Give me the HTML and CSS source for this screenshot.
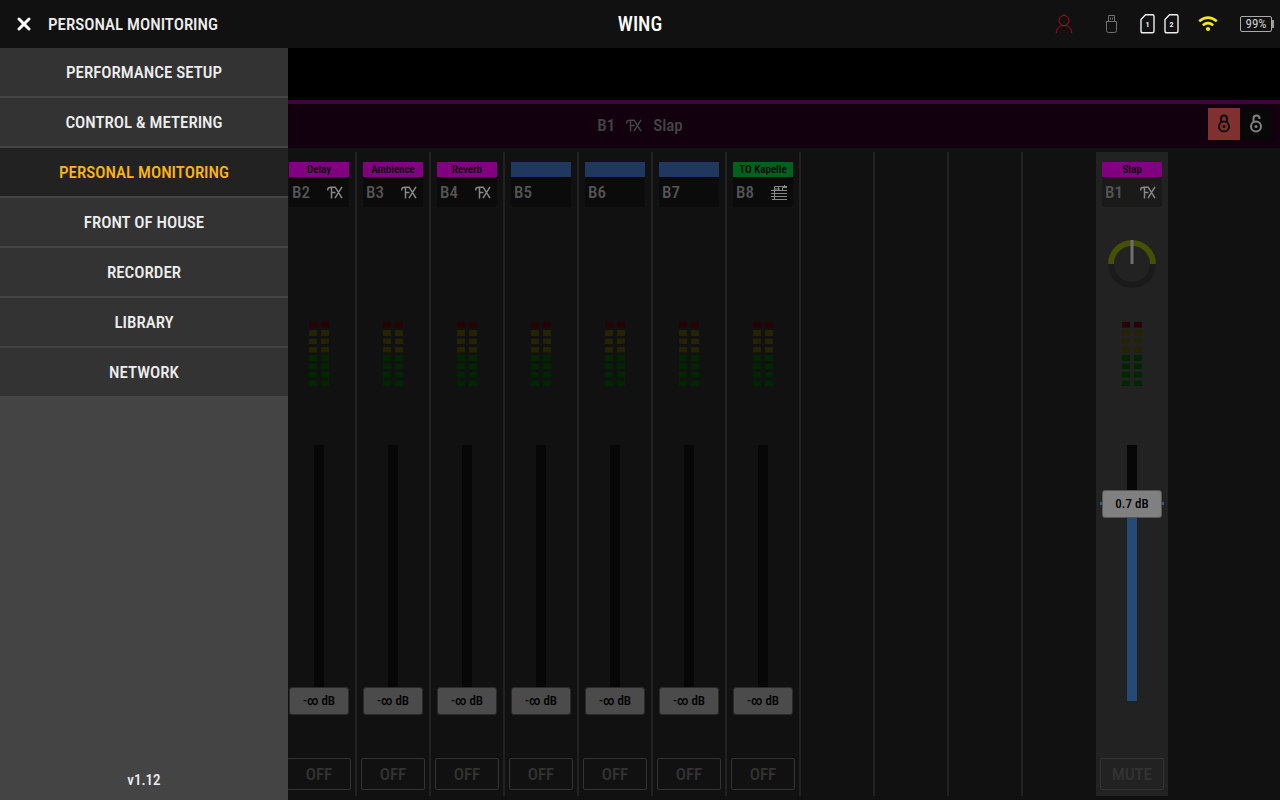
FILE: index.html
```html
<!DOCTYPE html>
<html lang="en">
<head>
  <meta charset="UTF-8" />
  <meta name="viewport" content="width=device-width, initial-scale=1.0" />
  <title>WING – Personal Monitoring</title>
  <link rel="stylesheet" href="styles.css">
</head>
<body>
  <svg class="sprite" aria-hidden="true">
    <symbol id="icon-fx" viewBox="0 0 16 13">
      <path d="M.8 4.500C.5 2 1.800 1.200 4 1.200h4.200L15 12.200M4.500 1.200v11.300M4.500 6.500h4M15 .8 8 12.200" />
    </symbol>
    <symbol id="icon-matrix" viewBox="0 0 16 15">
      <path d="M0 5.500h16M0 8.500h16M0 11.500h16M1 14.500h15M3.500 14V1.500H16M7.500 6V1.500M11.500 6V2.500H16M13.500 0v3M3.500 4H9" />
    </symbol>
    <symbol id="meter" viewBox="0 0 20 65">
      <path class="meter-red" d="M0 0h8v5.500H0zM12 0h8v5.500h-8z" />
      <path class="meter-yellow" d="M0 8h8v6H0zM12 8h8v6h-8zM0 16.500h8v5.500H0zM12 16.500h8v5.500h-8zM0 25h8v5.500H0zM12 25h8v5.500h-8z" />
      <path class="meter-green" d="M0 33h8v6H0zM12 33h8v6h-8zM0 41.500h8v5.500H0zM12 41.500h8v5.500h-8zM0 50h8v5.500H0zM12 50h8v5.500h-8zM0 58.500h8v5.500H0zM12 58.500h8v5.500h-8z" />
    </symbol>
  </svg>

  <header class="topbar">
    <div class="topbar-left">
      <button class="close-button" aria-label="Close menu">
        <svg width="14" height="14" viewBox="0 0 14 14"><path d="M2 2l10 10M12 2L2 12" /></svg>
      </button>
      <h1>PERSONAL MONITORING</h1>
    </div>
    <div class="device-name">WING</div>
    <div class="status">
      <svg class="status-user" width="18" height="20" viewBox="0 0 18 20"><circle cx="9" cy="6.500" r="5" /><path d="M1.200 19c.3-4.500 3-7.500 7.800-7.500s7.500 3 7.800 7.500" /></svg>
      <svg class="status-usb" width="13" height="20" viewBox="0 0 13 20"><path d="M3.500 7.500v-6h6v6M5.500 3.500v2M7.500 3.500v2M1.500 7.500h10v9q0 2-2 2h-6q-2 0-2-2z" /></svg>
      <div class="cards">
        <span class="card"><svg width="15" height="20" viewBox="0 0 15 20"><path d="M5.500.800h7q1.500 0 1.500 1.500v15q0 1.500-1.500 1.500h-10Q1 18.800 1 17.300V5.500z" /></svg><b>1</b></span>
        <span class="card"><svg width="15" height="20" viewBox="0 0 15 20"><path d="M5.500.800h7q1.500 0 1.500 1.500v15q0 1.500-1.500 1.500h-10Q1 18.800 1 17.300V5.500z" /></svg><b>2</b></span>
      </div>
      <svg class="status-wifi" width="20" height="16" viewBox="0 0 20 16"><path d="M1.200 5.200q8.800-7.200 17.600 0M4.800 9.200q5.200-4.200 10.400 0" /><circle cx="10" cy="13" r="2.100" /></svg>
      <div class="battery">99%</div>
    </div>
  </header>

  <main class="stage">
    <nav class="drawer" aria-label="Main menu">
      <a href="#setup">PERFORMANCE SETUP</a>
      <a href="#control">CONTROL &amp; METERING</a>
      <a href="#monitoring" class="active">PERSONAL MONITORING</a>
      <a href="#foh">FRONT OF HOUSE</a>
      <a href="#recorder">RECORDER</a>
      <a href="#library">LIBRARY</a>
      <a href="#network">NETWORK</a>
      <div class="version">v1.12</div>
    </nav>

    <div class="preview"></div>

    <div class="bus-bar">
      <div class="bus-title">
        <span>B1</span>
        <svg width="16" height="13"><use href="#icon-fx" /></svg>
        <span>Slap</span>
      </div>
      <div class="locks">
        <button class="lock locked" aria-label="Lock">
          <svg width="14" height="20" viewBox="0 0 14 20"><circle cx="7" cy="12.500" r="5" /><circle class="dot" cx="7" cy="12.500" r="1.500" /><path d="M4 8V4.500a3 3 0 0 1 6 0V8" /></svg>
        </button>
        <button class="lock" aria-label="Unlock">
          <svg width="14" height="20" viewBox="0 0 14 20"><circle cx="7" cy="12.500" r="5" /><circle class="dot" cx="7" cy="12.500" r="1.500" /><path d="M4.500 8V4.500a3 3 0 0 1 6 0V5" /></svg>
        </button>
      </div>
    </div>

    <div class="mixer">
      <div class="bank" id="bank"></div>
      <div class="master" id="master"></div>
    </div>
  </main>

  <script>
    const sends = [
      { id: 'B2', name: 'Delay', color: 'purple', icon: 'fx' },
      { id: 'B3', name: 'Ambience', color: 'purple', icon: 'fx' },
      { id: 'B4', name: 'Reverb', color: 'purple', icon: 'fx' },
      { id: 'B5', name: '', color: 'blue' },
      { id: 'B6', name: '', color: 'blue' },
      { id: 'B7', name: '', color: 'blue' },
      { id: 'B8', name: 'TO Kapelle', color: 'green', icon: 'matrix' }
    ];
    const slots = 11;

    const knob = `
      <label class="knob">
        <input type="range" min="-100" max="100" value="0" aria-label="B1 pan">
        <svg width="48" height="48" viewBox="0 0 48 48">
          <circle class="knob-ring" cx="24" cy="24" r="21" />
          <path class="knob-arc" d="M3 24a21 21 0 0 1 42 0" />
          <path class="knob-hand" d="M24 0v24" />
        </svg>
      </label>`;

    function strip(ch) {
      const icon = ch.icon ? `<svg class="icon-${ch.icon}"><use href="#icon-${ch.icon}" /></svg>` : '';
      return `
        <div class="scribble ${ch.color}">${ch.name}</div>
        <div class="channel"><span>${ch.id}</span>${icon}</div>
        <div class="pan">${ch.pan ? knob : ''}</div>
        <svg class="meter"><use href="#meter" /></svg>
        <div class="fader" style="--level: ${ch.level || 0}">
          <input type="range" id="fader-${ch.id}" min="0" max="1" step="any" value="${ch.level || 0}" aria-label="${ch.id} level">
          <output for="fader-${ch.id}">${ch.db || '-∞ dB'}</output>
        </div>
        <button class="mute">${ch.button || 'OFF'}</button>`;
    }

    // Unused slots stay as blank strips
    const bank = document.getElementById('bank');
    for (let i = 0; i < slots; i++) {
      const el = document.createElement('div');
      el.className = 'strip';
      if (sends[i]) el.innerHTML = strip(sends[i]);
      bank.appendChild(el);
    }

    document.getElementById('master').innerHTML = strip({
      id: 'B1', name: 'Slap', color: 'purple', icon: 'fx',
      pan: true, level: 0.77, db: '0.7 dB', button: 'MUTE'
    });
  </script>
</body>
</html>
```

FILE: styles.css
```css
* {
  margin: 0;
  padding: 0;
  box-sizing: border-box;
}

body {
  display: flex;
  flex-direction: column;
  height: 100vh;
  overflow: hidden;
  background: #111;
  color: #eee;
  font-family: 'Roboto Condensed', 'Liberation Sans Narrow', Roboto, sans-serif;
  font-size: 17px;
  font-weight: 500;
}

button, input, output {
  font: inherit;
}

button {
  border: none;
  cursor: pointer;
}

svg {
  display: block;
  fill: none;
  stroke: currentColor;
}

.sprite {
  position: absolute;
  width: 0;
  height: 0;
}

/* top bar */
.topbar {
  display: grid;
  grid-template-columns: 1fr auto 1fr;
  align-items: center;
  height: 48px;
  flex: none;
  background: #111;
}

.topbar-left {
  display: flex;
  align-items: center;
}

.topbar h1 {
  font-size: 17px;
  font-weight: 500;
}

.close-button {
  display: flex;
  align-items: center;
  justify-content: center;
  width: 48px;
  height: 48px;
  background: none;
  color: #fff;
}

.close-button svg {
  stroke-width: 3;
  stroke-linecap: round;
}

.device-name {
  font-size: 20px;
  color: #fff;
}

.status {
  display: flex;
  align-items: center;
  justify-content: flex-end;
  padding-right: 8px;
}

.status-user {
  color: #b8001c;
  margin-right: 32px;
}

.status-usb {
  color: #707070;
  margin-right: 22px;
}

.cards {
  display: flex;
  gap: 9px;
  margin-right: 19px;
}

.card {
  position: relative;
  color: #eee;
}

.card svg {
  stroke-width: 1.4;
}

.card b {
  position: absolute;
  inset: 5px 0 0;
  font-size: 8px;
  line-height: 12px;
  text-align: center;
}

.status-wifi {
  color: #f8e71c;
  stroke-width: 2.5;
  margin-right: 22px;
}

.status-wifi circle {
  fill: currentColor;
  stroke: none;
}

.battery {
  position: relative;
  width: 32px;
  height: 16px;
  border: 1px solid #aaa;
  border-radius: 2px;
  color: #ccc;
  font-size: 13px;
  font-weight: 400;
  line-height: 14px;
  text-align: center;
}

.battery::after {
  content: '';
  position: absolute;
  top: 3px;
  right: -3px;
  width: 2px;
  height: 8px;
  background: #999;
}

/* menu */
.stage {
  position: relative;
  display: flex;
  flex-direction: column;
  flex: 1;
  min-height: 0;
}

.drawer {
  position: absolute;
  top: 0;
  bottom: 0;
  left: 0;
  z-index: 10;
  display: flex;
  flex-direction: column;
  gap: 2px;
  width: 288px;
  background: #444;
}

.drawer a {
  height: 48px;
  background: #333;
  color: #eee;
  line-height: 48px;
  text-align: center;
  text-decoration: none;
}

.drawer a.active {
  background: #222;
  color: #fdb515;
}

.version {
  margin-top: auto;
  height: 40px;
  font-size: 15px;
  line-height: 40px;
  text-align: center;
}

/* selected bus */
.preview {
  height: 52px;
  flex: none;
  background: #000;
}

.bus-bar {
  display: grid;
  grid-template-columns: 1fr auto 1fr;
  align-items: center;
  height: 48px;
  flex: none;
  border-top: 4px solid #400040;
  background: #12000f;
}

.bus-title {
  grid-column: 2;
  display: flex;
  align-items: center;
  gap: 11px;
  padding-bottom: 2px;
  color: #444;
}

.bus-title svg {
  stroke-width: 1.5;
}

.locks {
  display: flex;
  align-self: start;
  justify-self: end;
  padding: 4px 8px 0 0;
}

.lock {
  display: flex;
  align-items: center;
  justify-content: center;
  width: 32px;
  height: 32px;
  background: #080808;
  color: #808080;
}

.lock.locked {
  background: #803030;
  color: #111;
}

.lock svg {
  stroke-width: 2;
}

.lock .dot {
  fill: currentColor;
  stroke: none;
}

/* strips */
.mixer {
  display: flex;
  justify-content: flex-end;
  flex: 1;
  min-height: 0;
  padding: 4px 112px 4px 0;
}

.bank {
  display: flex;
}

.strip,
.master {
  display: flex;
  flex-direction: column;
  align-items: center;
  width: 72px;
  padding: 10px 4px 6px;
}

.strip {
  box-sizing: content-box;
  width: 64px;
  border-right: 2px solid #222;
}

.strip:last-child {
  border-right-width: 1px;
  border-color: transparent;
}

.master {
  background: #222;
}

.scribble {
  width: 60px;
  height: 15px;
  flex: none;
  color: #000;
  font-size: 11px;
  line-height: 15px;
  text-align: center;
  white-space: nowrap;
}

.purple {
  background: #800080;
}

.blue {
  background: #203860;
}

.green {
  background: #006020;
}

.channel {
  display: flex;
  align-items: center;
  justify-content: space-between;
  width: 60px;
  height: 30px;
  padding: 0 6px 0 3px;
  flex: none;
  border-radius: 0 0 2px 2px;
  background: #0b0b0b;
  color: #555;
}

.master .channel {
  background: #1a1a1a;
}

.icon-fx {
  width: 16px;
  height: 13px;
  color: #888;
  stroke-width: 1.5;
}

.icon-matrix {
  width: 16px;
  height: 15px;
  color: #888;
}

.pan {
  height: 115px;
  padding-top: 33px;
  flex: none;
}

.knob {
  display: block;
  position: relative;
}

.knob input {
  position: absolute;
  inset: 0;
  width: 48px;
  opacity: 0;
}

.knob-ring {
  stroke: #1a1a1a;
  stroke-width: 6;
}

.knob-arc {
  stroke: #455000;
  stroke-width: 6;
}

.knob-hand {
  stroke: #707070;
  stroke-width: 3;
}

.meter {
  width: 20px;
  height: 65px;
  flex: none;
}

.meter-red, .meter-yellow, .meter-green {
  stroke: none;
}

.meter-red {
  fill: #280000;
}

.meter-yellow {
  fill: #252200;
}

.meter-green {
  fill: #002600;
}

.fader {
  --thumb: 28px;
  --travel: calc(100% - var(--thumb));
  position: relative;
  width: 64px;
  min-height: 0;
  margin: 44px 0 43px;
  flex: 1;
}

.fader input {
  display: block;
  width: 64px;
  height: 100%;
  appearance: none;
  writing-mode: vertical-lr;
  direction: rtl;
  background:
    linear-gradient(#254a75, #254a75) 50% calc(100% - 14px) / 10px calc(var(--travel) * var(--level)) no-repeat,
    linear-gradient(#070707, #070707) 50% 50% / 10px var(--travel) no-repeat;
}

.fader input::-webkit-slider-thumb {
  appearance: none;
  width: 60px;
  height: 28px;
  border: 1px solid #2a2a2a;
  border-radius: 3px;
  background: #4b4b4b;
}

.master .fader input::-webkit-slider-thumb {
  border-color: #555;
  background: #808080;
}

.fader output {
  position: absolute;
  right: 0;
  bottom: calc(var(--travel) * var(--level));
  left: 0;
  height: var(--thumb);
  color: #000;
  font-size: 13px;
  line-height: 28px;
  text-align: center;
  pointer-events: none;
}

/* level tick either side of the cap */
.master .fader output::before,
.master .fader output::after {
  content: '';
  position: absolute;
  top: 12px;
  left: 0;
  width: 2px;
  height: 3px;
  background: #2a5a94;
}

.master .fader output::after {
  right: 0;
  left: auto;
}

.mute {
  width: 64px;
  height: 32px;
  flex: none;
  border: 1px solid #333;
  border-radius: 2px;
  background: none;
  color: #333;
}
```
